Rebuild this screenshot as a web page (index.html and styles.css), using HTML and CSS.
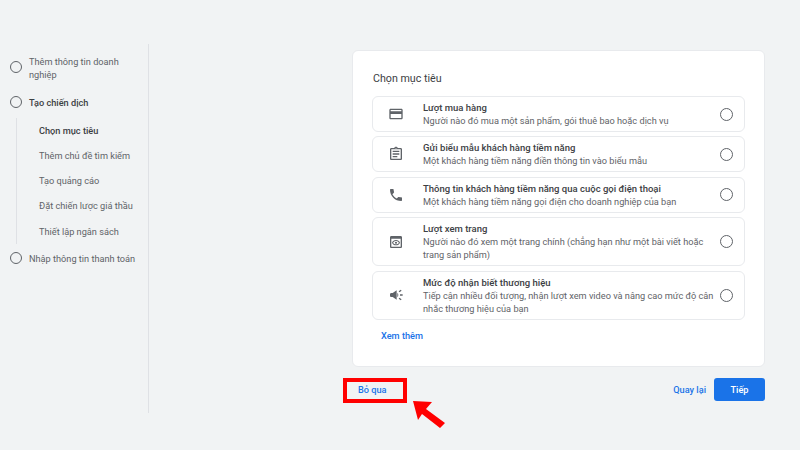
FILE: index.html
```html
<!DOCTYPE html>
<html>
<head>
    <title>Chọn mục tiêu</title>
    <link rel="stylesheet" href="styles.css">
</head>
<body>
    <div class="page">
        <aside class="sidebar">
            <div class="step step-first">
                <span class="dot"></span>
                <span>Thêm thông tin doanh nghiệp</span>
            </div>
            <div class="step step-bold">
                <span class="dot"></span>
                <span>Tạo chiến dịch</span>
            </div>
            <ul class="substeps">
                <li class="current">Chọn mục tiêu</li>
                <li>Thêm chủ đề tìm kiếm</li>
                <li>Tạo quảng cáo</li>
                <li>Đặt chiến lược giá thầu</li>
                <li>Thiết lập ngân sách</li>
            </ul>
            <div class="step">
                <span class="dot"></span>
                <span>Nhập thông tin thanh toán</span>
            </div>
        </aside>

        <main class="content">
            <section class="card">
                <h2>Chọn mục tiêu</h2>
                <div class="goals">
                    <div class="goal">
                        <svg class="icon" viewBox="0 0 24 24"><path d="M20 4H4c-1.11 0-1.99.89-1.99 2L2 18c0 1.11.89 2 2 2h16c1.11 0 2-.89 2-2V6c0-1.11-.89-2-2-2zm0 14H4v-6h16v6zm0-10H4V6h16v2z"/></svg>
                        <div class="goal-text">
                            <h3>Lượt mua hàng</h3>
                            <p>Người nào đó mua một sản phẩm, gói thuê bao hoặc dịch vụ</p>
                        </div>
                        <span class="dot"></span>
                    </div>
                    <div class="goal">
                        <svg class="icon" viewBox="0 0 24 24"><path d="M19 3h-4.18C14.4 1.84 13.3 1 12 1s-2.4.84-2.82 2H5c-1.1 0-2 .9-2 2v14c0 1.1.9 2 2 2h14c1.1 0 2-.9 2-2V5c0-1.1-.9-2-2-2zm-7-.25c.41 0 .75.34.75.75s-.34.75-.75.75-.75-.34-.75-.75.34-.75.75-.75zM19 19H5V5h14v14zM7 7h10v2H7zm0 4h10v2H7zm0 4h7v2H7z"/></svg>
                        <div class="goal-text">
                            <h3>Gửi biểu mẫu khách hàng tiềm năng</h3>
                            <p>Một khách hàng tiềm năng điền thông tin vào biểu mẫu</p>
                        </div>
                        <span class="dot"></span>
                    </div>
                    <div class="goal">
                        <svg class="icon" viewBox="0 0 24 24"><path d="M6.62 10.79c1.44 2.83 3.76 5.14 6.59 6.59l2.2-2.2c.27-.27.67-.36 1.02-.24 1.12.37 2.33.57 3.57.57.55 0 1 .45 1 1V20c0 .55-.45 1-1 1-9.39 0-17-7.61-17-17 0-.55.45-1 1-1h3.5c.55 0 1 .45 1 1 0 1.25.2 2.45.57 3.57.11.35.03.74-.25 1.02l-2.2 2.2z"/></svg>
                        <div class="goal-text">
                            <h3>Thông tin khách hàng tiềm năng qua cuộc gọi điện thoại</h3>
                            <p>Một khách hàng tiềm năng gọi điện cho doanh nghiệp của bạn</p>
                        </div>
                        <span class="dot"></span>
                    </div>
                    <div class="goal">
                        <svg class="icon" viewBox="0 0 24 24"><path d="M19 3H5c-1.11 0-2 .9-2 2v14c0 1.1.89 2 2 2h14c1.1 0 2-.9 2-2V5c0-1.1-.89-2-2-2zm0 16H5V7h14v12zm-7-8.5c1.84 0 3.48.96 4.34 2.5-.86 1.54-2.5 2.5-4.34 2.5S8.52 14.54 7.66 13c.86-1.54 2.5-2.5 4.34-2.5M12 9c-2.73 0-5.06 1.66-6 4 .94 2.34 3.27 4 6 4s5.06-1.66 6-4c-.94-2.34-3.27-4-6-4zm0 5.5c-.83 0-1.5-.67-1.5-1.5s.67-1.5 1.5-1.5 1.5.67 1.5 1.5-.67 1.5-1.5 1.5z"/></svg>
                        <div class="goal-text">
                            <h3>Lượt xem trang</h3>
                            <p>Người nào đó xem một trang chính (chẳng hạn như một bài viết hoặc trang sản phẩm)</p>
                        </div>
                        <span class="dot"></span>
                    </div>
                    <div class="goal">
                        <svg class="icon" viewBox="0 0 24 24"><path d="M18 11v2h4v-2h-4zm-2 6.61c.96.71 2.21 1.65 3.2 2.39.4-.53.8-1.07 1.2-1.6-.99-.74-2.24-1.68-3.2-2.4-.4.54-.8 1.08-1.2 1.61zM20.4 5.6c-.4-.53-.8-1.07-1.2-1.6-.99.74-2.24 1.68-3.2 2.4.4.53.8 1.07 1.2 1.6.96-.72 2.21-1.65 3.2-2.4zM5 9c-1.1 0-2 .9-2 2v2c0 1.1.9 2 2 2h2l6 4V5L7 9H5zm10.5 3c0-1.33-.58-2.53-1.5-3.35v6.69c.92-.81 1.5-2.01 1.5-3.34z"/></svg>
                        <div class="goal-text">
                            <h3>Mức độ nhận biết thương hiệu</h3>
                            <p>Tiếp cận nhiều đối tượng, nhận lượt xem video và nâng cao mức độ cân nhắc thương hiệu của bạn</p>
                        </div>
                        <span class="dot"></span>
                    </div>
                </div>
                <a class="more">Xem thêm</a>
            </section>

            <div class="actions">
                <a class="skip">Bỏ qua</a>
                <a class="back">Quay lại</a>
                <a class="next">Tiếp</a>
            </div>
        </main>
    </div>

    <!-- red callout on top of the screenshot -->
    <div class="callout"></div>
    <svg class="arrow" viewBox="0 0 40 34"><polygon points="3,1 22,2 16,9 35,23 30,28 12,14 8,20"/></svg>
</body>
</html>
```

FILE: styles.css
```css
* { box-sizing: border-box; }
html, body { margin: 0; height: 100%; }
body { background: #f1f3f4; font-family: Roboto, "Liberation Sans", sans-serif; font-size: 9.2px; color: #5f6368; overflow: hidden; position: relative; }

.page { display: flex; height: 450px; }

.dot { flex: none; display: block; width: 12px; height: 12px; border: 1.5px solid #5f6368; border-radius: 50%; }

.sidebar { flex: none; width: 149px; height: 369px; margin-top: 44px; padding: 11px 8px 0 10px; border-right: 1px solid #dfe1e5; }
.step { display: flex; align-items: center; gap: 7px; line-height: 13px; }
.step-first { align-items: flex-start; margin-bottom: 14.5px; padding-right: 6px; }
.step-first .dot { margin-top: 6px; }
.step-bold { font-weight: 500; color: #3c4043; }
.substeps { list-style: none; margin: 9px 0 8px 6px; padding: 0 0 0 22px; border-left: 1px solid #dfe1e5; }
.substeps li { height: 25.3px; line-height: 25.3px; }
.substeps .current { font-weight: 500; color: #3c4043; }

.content { width: 413px; margin: 50px 0 0 203px; }

.card { height: 317px; padding: 21px 19px 0; background: #fff; border: 1px solid #e8eaed; border-radius: 6px; }
.card h2 { margin: 0 0 11px 1px; font-size: 10.7px; font-weight: 400; line-height: 13px; color: #3c4043; }

.goals { display: flex; flex-direction: column; gap: 4.4px; }
.goal { display: flex; align-items: center; padding: 0 11px 0 15px; min-height: 36px; border: 1px solid #e8eaed; border-radius: 6px; }
.icon { flex: none; width: 16px; height: 16px; margin-right: 19px; fill: #5f6368; }
.goal-text { flex: 1; padding: 4px 0; }
.goal-text h3 { margin: 0; font-size: 9.5px; font-weight: 500; line-height: 13px; color: #3c4043; }
.goal-text p { margin: 0; line-height: 13px; padding-right: 4px; }
.goal .dot { width: 13px; height: 13px; }

.more { display: block; margin: 9px 0 0 9px; font-weight: 500; line-height: 13px; color: #1a73e8; }

.actions { display: flex; align-items: center; margin-top: 11px; font-weight: 500; color: #1a73e8; }
.skip { padding-left: 6px; margin-right: auto; }
.next { display: block; width: 51px; height: 23px; margin-left: 8px; line-height: 23px; text-align: center; color: #fff; background: #1a73e8; border-radius: 3px; }

.callout { position: absolute; left: 343px; top: 378px; width: 64px; height: 25px; border: 4px solid #ff0000; }
.arrow { position: absolute; left: 410px; top: 400px; width: 40px; height: 34px; fill: #ff0000; }
```
